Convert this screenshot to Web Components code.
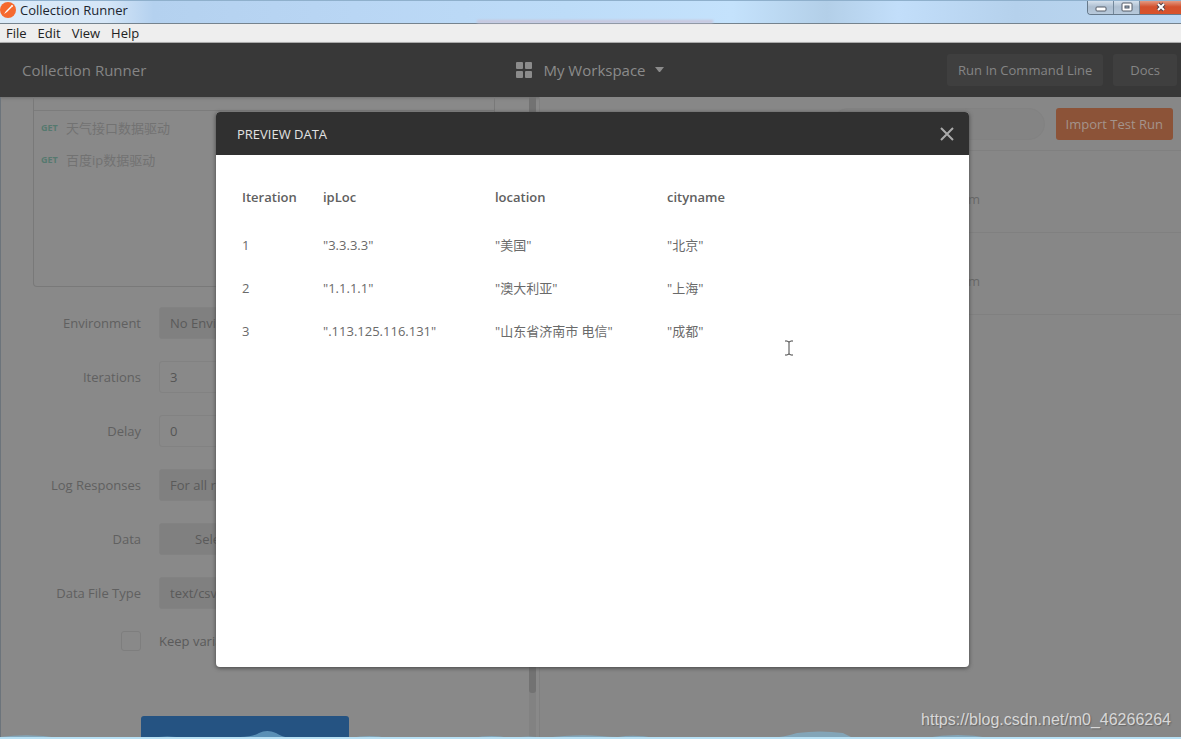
<!DOCTYPE html>
<html lang="en">
<head>
<meta charset="utf-8">
<title>Collection Runner</title>
<style>
html, body { margin: 0; height: 100%; }
body { font: 13px/20px "Open Sans", "Noto Sans CJK SC", sans-serif; color: #5a5a5a; background: #898989; overflow: hidden; }
</style>
</head>
<body>
<runner-app></runner-app>
<script>
const define = (name, html, setup) => {
  const template = document.createElement('template');
  template.innerHTML = html;
  customElements.define(name, class extends HTMLElement {
    constructor() {
      super();
      this.attachShadow({ mode: 'open' }).append(template.content.cloneNode(true));
    }
    connectedCallback() { if (setup) setup(this, this.shadowRoot); }
  });
};

define('title-bar', `
<style>
:host { display: flex; align-items: flex-start; box-sizing: border-box; height: 24px; border-top: 1px solid #8fb0cc; border-bottom: 1px solid #75838e;
  background: linear-gradient(90deg, #dcebf8 0, #d5e6f7 9%, #b4d1ef 13%, #b9d6f4 30%, #bddcf8 48%, #c4e2fc 62%, #b3cfe8 70%, #c2defa 76%, #b5d1ec 86%, #bcd7f1 100%); color: #1c252e; }
svg { display: block; }
.logo { margin: 1px 4px 0 0; }
span { flex: 1; line-height: 18px; }
.glow { width: 236px; height: 3px; margin: 19px 374px 0 0; background: #c9c5d9; filter: blur(1px); }
.buttons { display: flex; border: 1px solid #66798b; border-width: 0 0 1px 1px; border-radius: 0 0 0 4px; overflow: hidden; }
button { width: 26px; height: 13px; border: 0; border-right: 1px solid #74889b; padding: 0 0 2px; display: flex; justify-content: center; align-items: center; background: linear-gradient(#d5e1ed, #aebfd1 45%, #b7c9db); }
button.close { width: 41px; border: 0; background: linear-gradient(#e39a82, #d3512e 45%, #d9532b); }
</style>
<svg class="logo" width="16" height="16" viewBox="0 0 16 16"><circle cx="8" cy="8" r="8" fill="#f5692f"/><path d="M4 12l2-3 5-5 1 1-5 5z" fill="#fff"/><circle cx="12" cy="4" r="1" fill="#fff"/></svg>
<span>Collection Runner</span>
<div class="glow"></div>
<div class="buttons">
<button aria-label="Minimize"><svg width="12" height="10"><rect x="1" y="5" width="10" height="4" rx="1" fill="#fff" stroke="#535a66"/></svg></button>
<button aria-label="Maximize"><svg width="12" height="10"><rect x="1" y="1" width="10" height="8" rx="1" fill="#fff" stroke="#535a66"/><rect x="4" y="4" width="4" height="2" fill="#9cb0c2" stroke="#535a66"/></svg></button>
<button class="close" aria-label="Close"><svg width="12" height="10"><path d="M3 2l6 6M9 2L3 8" stroke="#554249" stroke-width="4"/><path d="M3 2l6 6M9 2L3 8" stroke="#fff" stroke-width="2"/></svg></button>
</div>`);

define('menu-bar', `
<style>
:host { display: flex; gap: 11px; box-sizing: border-box; height: 19px; padding-left: 6px; background: #eee; border-bottom: 1px solid #b4b4b4; color: #222; }
button { border: 0; padding: 0; background: none; font: inherit; line-height: 18px; color: inherit; }
</style>
<button>File</button><button>Edit</button><button>View</button><button>Help</button>`);

define('runner-header', `
<style>
:host { display: grid; grid-template-columns: 1fr auto 1fr; align-items: center; box-sizing: border-box; height: 54px; padding: 0 4px; background: #383838; color: #858585; position: relative; box-shadow: 0 1px 3px #5558; }
h1 { margin: 0; padding-left: 18px; font-size: 15px; font-weight: 400; }
button { font: inherit; color: inherit; border: 0; background: none; padding: 0; }
.space { display: flex; align-items: center; font-size: 15px; font-weight: 500; color: #8b8b8b; }
.space svg:first-child { margin-right: 11px; }
.space svg:last-child { margin-left: 9px; }
.actions { display: flex; justify-content: flex-end; gap: 10px; font-weight: 500; }
.actions button { height: 32px; padding: 0 11px; background: #3f3f3f; border-radius: 3px; }
.actions button:last-child { padding: 0 17px; }
</style>
<h1>Collection Runner</h1>
<button class="space"><svg width="16" height="16" fill="#8b8b8b"><rect width="7" height="7" rx="1"/><rect x="9" width="7" height="7" rx="1"/><rect y="9" width="7" height="7" rx="1"/><rect x="9" y="9" width="7" height="7" rx="1"/></svg>My Workspace<svg width="10" height="6"><path d="M0 0h9L5 5H4z" fill="#8b8b8b"/></svg></button>
<div class="actions"><button>Run In Command Line</button><button>Docs</button></div>`);

define('request-item', `
<style>
:host { display: flex; align-items: center; height: 32px; padding-left: 7px; color: #727272; }
b { width: 25px; font-size: 9px; color: #56796f; }
</style>
<b>GET</b><slot></slot>`);

define('form-row', `
<style>
:host { display: grid; grid-template-columns: 141px 1fr; column-gap: 18px; align-items: center; height: 32px; color: #606060; }
label { text-align: right; }
select, input, button { box-sizing: border-box; width: 208px; height: 32px; margin: 0; border: 1px solid #828282; border-radius: 3px; padding: 0 10px; background: #808080; color: #5a5a5a; font: inherit; appearance: none; outline: 0; }
input { background: #898989; color: #555; }
button { width: 132px; }
</style>
<label for="control"></label>`, (host, root) => {
  root.querySelector('label').textContent = host.getAttribute('label');
  const kind = host.getAttribute('kind'), value = host.getAttribute('value');
  const control = document.createElement(kind);
  control.id = 'control';
  if (kind === 'input') control.value = value;
  else if (kind === 'select') control.append(new Option(value));
  else control.textContent = value;
  root.append(control);
});

define('check-row', `
<style>
:host { display: flex; align-items: center; gap: 18px; height: 20px; padding-left: 121px; color: #5a5a5a; }
input { appearance: none; box-sizing: border-box; width: 20px; height: 20px; margin: 0; border: 1px solid #7e7e7e; border-radius: 3px; }
</style>
<input type="checkbox" id="keep"><label for="keep"><slot></slot></label>`);

define('runner-form', `
<style>
:host { display: flex; box-sizing: border-box; overflow: hidden; border-right: 1px solid #808080; }
.content { flex: 1; min-width: 0; }
.list { box-sizing: border-box; height: 190px; margin: 0 34px 20px 33px; border: 1px solid #797979; border-top: 0; border-radius: 0 0 4px 4px; }
.cap { height: 13px; margin-bottom: 1px; border-bottom: 1px solid #7c7c7c; }
.rows { display: grid; row-gap: 22px; margin-bottom: 22px; }
.run { display: block; width: 208px; height: 40px; margin: 65px 0 0 141px; border: 0; border-radius: 3px; background: #255382; }
.track { width: 7px; margin-right: 3px; background: #828282; }
.thumb { height: 596px; background: #727272; border-radius: 0 0 3px 3px; }
</style>
<div class="content">
<div class="list"><div class="cap"></div><request-item>天气接口数据驱动</request-item><request-item>百度ip数据驱动</request-item></div>
<div class="rows">
<form-row label="Environment" kind="select" value="No Environment"></form-row>
<form-row label="Iterations" kind="input" value="3"></form-row>
<form-row label="Delay" kind="input" value="0"></form-row>
<form-row label="Log Responses" kind="select" value="For all requests"></form-row>
<form-row label="Data" kind="button" value="Select File"></form-row>
<form-row label="Data File Type" kind="select" value="text/csv"></form-row>
</div>
<check-row>Keep variable values</check-row>
<button class="run" aria-label="Run"></button>
</div>
<div class="track"><div class="thumb"></div></div>`);

define('run-history', `
<style>
:host { display: block; background: #878787; color: #686868; }
.tools { display: flex; align-items: center; justify-content: flex-end; gap: 11px; box-sizing: border-box; height: 54px; padding-right: 8px; border-bottom: 1px solid #808080; }
input { box-sizing: border-box; width: 213px; height: 32px; border: 1px solid #828282; border-radius: 16px; background: #848484; outline: 0; }
button { height: 32px; padding: 0 10px; border: 0; border-radius: 3px; background: #8c5338; color: #a4948c; font: inherit; font-weight: 500; }
.run { display: grid; grid-template-columns: 1fr 201px; align-items: center; box-sizing: border-box; height: 82px; padding-top: 14px; border-bottom: 1px solid #808080; text-align: right; }
</style>
<div class="tools"><input type="search" aria-label="Search runs"><button>Import Test Run</button></div>
<div class="run"><span>m</span></div>
<div class="run"><span>m</span></div>`);

define('preview-dialog', `
<style>
:host { display: flex; flex-direction: column; background: #fff; border-radius: 4px; overflow: hidden; box-shadow: 0 1px 4px #444; }
header { display: flex; align-items: center; justify-content: space-between; height: 43px; padding: 0 15px 0 21px; background: #303030; color: #e2e2e2; }
h2 { margin: 0; font-size: 13px; font-weight: 500; }
button { border: 0; padding: 0; background: none; }
svg { display: block; }
table { width: 600px; margin: 20px 0 0 26px; border-collapse: collapse; table-layout: fixed; text-align: left; color: #6a6a6a; }
th, td { height: 43px; padding: 0; }
th { height: 48px; vertical-align: top; line-height: 44px; font-weight: 600; color: #606060; }
th:first-child { width: 81px; }
th:nth-child(2), th:nth-child(3) { width: 172px; }
</style>
<header><h2>PREVIEW DATA</h2><button aria-label="Close"><svg width="14" height="14"><path d="M1 1l12 12M13 1L1 13" stroke="#aaa" stroke-width="2"/></svg></button></header>
<table>
<thead><tr><th>Iteration</th><th>ipLoc</th><th>location</th><th>cityname</th></tr></thead>
<tbody>
<tr><td>1</td><td>"3.3.3.3"</td><td>"美国"</td><td>"北京"</td></tr>
<tr><td>2</td><td>"1.1.1.1"</td><td>"澳大利亚"</td><td>"上海"</td></tr>
<tr><td>3</td><td>".113.125.116.131"</td><td>"山东省济南市 电信"</td><td>"成都"</td></tr>
</tbody>
</table>`);

define('wave-edge', `
<style>
:host { display: block; height: 10px; }
svg { display: block; width: 100%; height: 10px; }
</style>
<svg viewBox="0 0 1181 10" preserveAspectRatio="none">
<path d="M0 8Q30 4 60 9H150Q167 6 185 9L240 8Q253 8 259 4Q267 0 276 4Q282 8 290 9H350Q370 5 388 9H472Q492 5 510 9Q530 6 545 9Q575 5 600 7Q610 8 618 8Q635 5 655 9H770Q785 8 797 4Q820 1 843 4L853 9H925Q958 3 990 9H1181V10H0z" fill="#80b9d8" fill-opacity=".6"/>
<path d="M0 8h1181v2H0z" fill="#b7e0f4"/></svg>`);

define('runner-app', `
<style>
:host { display: flex; flex-direction: column; height: 100vh; position: relative; overflow: hidden; }
main { flex: 1; min-height: 0; display: grid; grid-template-columns: 540fr 641fr; grid-template-rows: 100%; position: relative; box-shadow: inset 1px 0 #6c747b; }
.overlay { position: absolute; inset: 0; display: flex; justify-content: center; padding: 15px 0 72px 4px; }
preview-dialog { width: 64%; max-width: 753px; }
.cursor { position: absolute; left: 784px; top: 340px; }
wave-edge { position: absolute; left: 0; right: 0; bottom: 0; }
.mark { position: absolute; right: 10px; bottom: 9px; font: 16px/20px "Liberation Sans", sans-serif; color: #d8d8d8; text-shadow: 1px 1px 1px #666; }
</style>
<title-bar></title-bar>
<menu-bar></menu-bar>
<runner-header></runner-header>
<main>
<runner-form></runner-form>
<run-history></run-history>
<div class="overlay"><preview-dialog></preview-dialog></div>
</main>
<svg class="cursor" width="10" height="16"><path d="M1 1h2l2 1 2-1h2M5 2v12M1 15h2l2-1 2 1h2" fill="none" stroke="#444"/></svg>
<wave-edge></wave-edge>
<div class="mark">https://blog.csdn.net/m0_46266264</div>`);
</script>
</body>
</html>
